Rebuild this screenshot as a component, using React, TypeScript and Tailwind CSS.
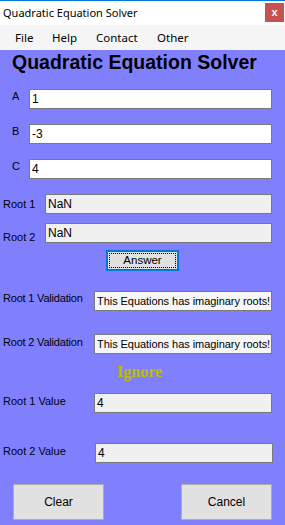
import React from "react";

const labelFont = { fontFamily: '"Liberation Sans", Arial, sans-serif' };
const uiFont = { fontFamily: '"Noto Sans", "Open Sans", sans-serif' };

function Field({
  value,
  readOnly = false,
  size = "text-[12px]",
  className = "",
}: {
  value: string;
  readOnly?: boolean;
  size?: string;
  className?: string;
}) {
  return (
    <div
      className={
        "h-[20px] border border-[#7a7a7a] flex items-center pl-[2px] text-black whitespace-nowrap overflow-hidden " +
        size +
        " " +
        (readOnly ? "bg-[#f0f0f0] " : "bg-white ") +
        className
      }
    >
      {value}
    </div>
  );
}

export default function App() {
  return (
    <div className="w-[285px] h-[525px] bg-[#8080ff] flex flex-col overflow-hidden" style={labelFont}>
      {/* title bar */}
      <div className="h-[25px] bg-white border-t border-[#0078d7] flex items-start justify-between shrink-0">
        <span className="ml-[3px] mt-[4px] text-[11px] text-black leading-[16px]" style={uiFont}>
          Quadratic Equation Solver
        </span>
        <div className="mt-[2px] mr-[1px] w-[19px] h-[19px] bg-[#c75050] flex items-center justify-center text-white text-[11px] font-bold leading-none">
          x
        </div>
      </div>

      {/* menu bar */}
      <div className="h-[25px] bg-[#f5f5f5] flex items-center text-[11.5px] text-black shrink-0" style={uiFont}>
        <span className="ml-[15px] w-[37px]">File</span>
        <span className="w-[44px]">Help</span>
        <span className="w-[61px]">Contact</span>
        <span>Other</span>
      </div>

      {/* heading */}
      <div className="mt-[2px] h-[20px] leading-[20px] pl-[12px] text-[19.5px] font-bold text-black">
        Quadratic Equation Solver
      </div>

      {/* A B C */}
      <div className="mt-[17px] h-[20px] flex items-start text-[11px] leading-[13px]">
        <span className="ml-[12px] mt-[1px] w-[17px]">A</span>
        <Field value="1" className="w-[243px]" />
      </div>
      <div className="mt-[15px] h-[20px] flex items-start text-[11px] leading-[13px]">
        <span className="ml-[12px] mt-[1px] w-[17px]">B</span>
        <Field value="-3" className="w-[243px]" />
      </div>
      <div className="mt-[15px] h-[20px] flex items-start text-[11px] leading-[13px]">
        <span className="ml-[12px] mt-[1px] w-[17px]">C</span>
        <Field value="4" className="w-[243px]" />
      </div>

      {/* roots */}
      <div className="mt-[15px] h-[20px] flex items-start text-[11px] leading-[13px]">
        <span className="ml-[3px] mt-[4px] w-[42px]">Root 1</span>
        <Field value="NaN" readOnly className="w-[227px]" />
      </div>
      <div className="mt-[9px] h-[20px] flex items-start text-[11px] leading-[13px]">
        <span className="ml-[3px] mt-[8px] w-[42px]">Root 2</span>
        <Field value="NaN" readOnly className="w-[227px]" />
      </div>

      {/* answer */}
      <div className="mt-[7px] flex">
        <button className="ml-[106px] w-[73px] h-[21px] border-2 border-[#0078d7] bg-[#e1e1e1] p-[1px] flex">
          <span className="flex-1 border border-dotted border-black flex items-center justify-center text-[11.5px] text-black leading-none">
            Answer
          </span>
        </button>
      </div>

      {/* validations */}
      <div className="mt-[20px] h-[20px] flex items-start text-[11px] leading-[13px]">
        <span className="ml-[3px] mt-[1px] w-[91px] whitespace-nowrap tracking-[-0.2px]">Root 1 Validation</span>
        <Field value="This Equations has imaginary roots!" readOnly size="text-[11px] tracking-[-0.05px]" className="w-[178px] bg-[#f6f6f6]" />
      </div>
      <div className="mt-[23px] h-[20px] flex items-start text-[11px] leading-[13px]">
        <span className="ml-[3px] mt-[2px] w-[91px] whitespace-nowrap tracking-[-0.2px]">Root 2 Validation</span>
        <Field value="This Equations has imaginary roots!" readOnly size="text-[11px] tracking-[-0.05px]" className="w-[178px] bg-[#f6f6f6]" />
      </div>

      {/* ignore */}
      <div
        className="mt-[9px] h-[18px] leading-[18px] ml-[117px] text-[16px] font-bold text-[#bcbc00]"
        style={{ fontFamily: '"Liberation Serif", "Times New Roman", serif' }}
      >
        Ignore
      </div>

      {/* values */}
      <div className="mt-[12px] h-[20px] flex items-start text-[11px] leading-[13px]">
        <span className="ml-[3px] mt-[2px] w-[91px] whitespace-nowrap">Root 1 Value</span>
        <Field value="4" readOnly className="w-[178px]" />
      </div>
      <div className="mt-[30px] h-[20px] flex items-start text-[11px] leading-[13px]">
        <span className="ml-[3px] mt-[2px] w-[92px] whitespace-nowrap">Root 2 Value</span>
        <Field value="4" readOnly className="w-[178px]" />
      </div>

      {/* buttons */}
      <div className="mt-[21px] flex">
        <button className="ml-[13px] w-[91px] h-[36px] bg-[#e1e1e1] border border-[#adadad] text-[12px] text-black">
          Clear
        </button>
        <button className="ml-[77px] w-[91px] h-[36px] bg-[#e1e1e1] border border-[#adadad] text-[12px] text-black">
          Cancel
        </button>
      </div>
    </div>
  );
}
